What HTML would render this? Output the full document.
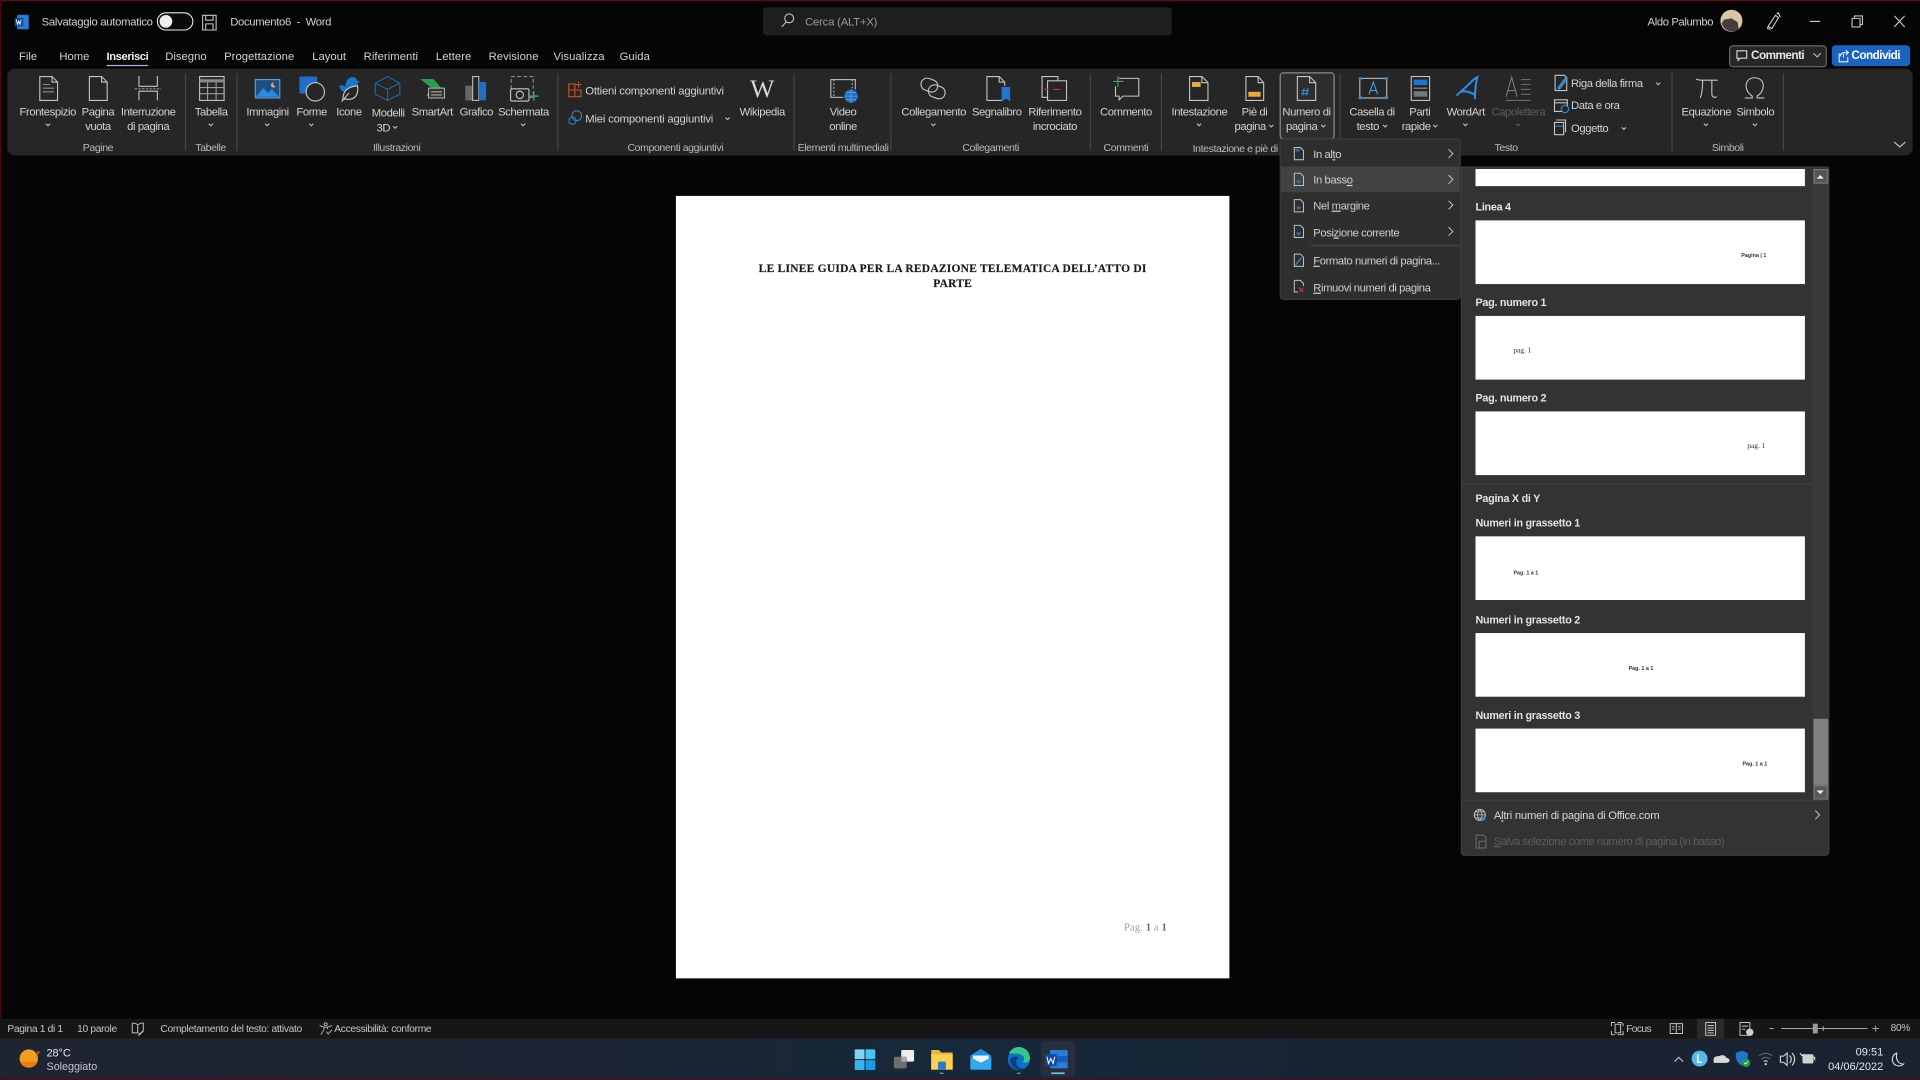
<!DOCTYPE html>
<html lang="it"><head><meta charset="utf-8"><title>Documento6 - Word</title>
<style>
html,body{margin:0;padding:0;width:1920px;height:1080px;overflow:hidden;background:#050505}
#w{position:absolute;left:0;top:0;width:1568px;height:882px;transform:scale(1.22449);transform-origin:0 0;background:#050505;font-family:"Liberation Sans",sans-serif;font-size:9.2px;letter-spacing:-.33px;color:#d2d2d2;overflow:hidden;filter:blur(.25px)}
#w div{position:absolute}
.t{position:absolute;white-space:nowrap;line-height:12px;transform:translateY(-50%)}
.c{position:absolute;white-space:nowrap;line-height:12px;transform:translate(-50%,calc(-50% + .3px));text-align:center}
.g{color:#b8b8b8;font-size:8.6px}
.sep{width:1px;top:60px;height:63px;background:#454545}
.th{left:1205px;width:269px;background:#fff}
.h{position:absolute;left:1205px;white-space:nowrap;font-weight:bold;font-size:8.8px;letter-spacing:-.22px;color:#e4e4e4;line-height:12px;transform:translateY(-50%)}
.n{position:absolute;white-space:nowrap;color:#333;line-height:8px;transform:translateY(-50%);letter-spacing:0}
.m{position:absolute;left:1072.5px;white-space:nowrap;color:#cfcfcf;line-height:12px;transform:translateY(-50%)}
.tab{position:absolute;white-space:nowrap;line-height:12px;transform:translateY(-50%);top:46px;letter-spacing:0}
.s{position:absolute;white-space:nowrap;line-height:12px;transform:translateY(-50%);top:840px;font-size:8.4px;letter-spacing:-.28px;color:#c4c4c4}
svg{position:absolute;left:0;top:0}
</style></head><body>
<div id="w">
<!-- window border -->
<div style="left:0;top:0;width:1568px;height:1px;background:#5e0c14"></div>
<div style="left:0;top:0;width:1px;height:882px;background:#4a0a10"></div>

<!-- search -->
<div style="left:623px;top:6px;width:334px;height:23px;background:#1e1e1e;border-radius:3px"></div>

<!-- ribbon -->
<div style="left:6px;top:56px;width:1556px;height:71px;background:#262626;border-radius:6px"></div>
<div class="sep" style="left:151px"></div><div class="sep" style="left:193px"></div><div class="sep" style="left:455px"></div><div class="sep" style="left:648px"></div><div class="sep" style="left:727px"></div><div class="sep" style="left:890px"></div><div class="sep" style="left:948px"></div><div class="sep" style="left:1094px"></div><div class="sep" style="left:1365px"></div><div class="sep" style="left:1456px"></div>
<div style="left:1045px;top:59px;width:43px;height:53px;border:1px solid #8c8c8c;border-radius:3px;background:#2e2e2e"></div>

<!-- doc page -->
<div style="left:552px;top:160px;width:451.500px;height:638.700px;background:#fff"></div>
<span class="c" style="left:778px;top:220px;font-family:'Liberation Serif',serif;font-weight:bold;font-size:9.400px;letter-spacing:.2px;color:#1a1a1a;-webkit-text-stroke:.12px #1a1a1a">LE LINEE GUIDA PER LA REDAZIONE TELEMATICA DELL’ATTO DI</span>
<span class="c" style="left:778px;top:231.500px;font-family:'Liberation Serif',serif;font-weight:bold;font-size:9.400px;letter-spacing:.2px;color:#1a1a1a;-webkit-text-stroke:.12px #1a1a1a">PARTE</span>
<span class="t" style="left:918px;top:758px;font-family:'Liberation Serif',serif;font-size:8.400px;letter-spacing:.2px;color:#9a9a9a">Pag. <b style="color:#666">1</b> a <b style="color:#666">1</b></span>

<!-- status + taskbar -->
<div style="left:0;top:832px;width:1568px;height:16px;background:#161616"></div>
<div style="left:1386px;top:832px;width:22px;height:16px;background:#2a2a2a"></div>
<div style="left:0;top:848px;width:1568px;height:34px;background:linear-gradient(90deg,#1f2431 0,#1c2533 30%,#16283a 50%,#182434 70%,#1b2230 100%)"></div>
<div style="left:850px;top:850px;width:28px;height:29px;background:#262f3b;border-radius:3px"></div>
<div style="left:0;top:881px;width:1568px;height:1px;background:#4a0f18"></div>

<!-- title bar text -->
<span class="t" style="left:34px;top:17.500px;letter-spacing:-.22px">Salvataggio automatico</span>
<span class="t" style="left:188px;top:17.500px;letter-spacing:-.25px">Documento6 &nbsp;-&nbsp; Word</span>
<span class="t" style="left:657.500px;top:17.800px;color:#9a9a9a;letter-spacing:-.15px">Cerca (ALT+X)</span>
<span class="t" style="left:1345.500px;top:17.500px;letter-spacing:-.3px">Aldo Palumbo</span>

<!-- tabs -->
<span class="tab" style="left:15.500px">File</span>
<span class="tab" style="left:48.500px">Home</span>
<span class="tab" style="left:87px;color:#eee;font-weight:bold;letter-spacing:-.35px">Inserisci</span>
<div style="left:87px;top:52.500px;width:34px;height:1.600px;background:#a9b7dc"></div>
<span class="tab" style="left:135px">Disegno</span>
<span class="tab" style="left:183px;letter-spacing:.05px">Progettazione</span>
<span class="tab" style="left:255px">Layout</span>
<span class="tab" style="left:297px;letter-spacing:.05px">Riferimenti</span>
<span class="tab" style="left:356px;letter-spacing:.05px">Lettere</span>
<span class="tab" style="left:399px;letter-spacing:.05px">Revisione</span>
<span class="tab" style="left:452px;letter-spacing:.05px">Visualizza</span>
<span class="tab" style="left:506px;letter-spacing:.05px">Guida</span>

<!-- Commenti/Condividi -->
<div style="left:1412px;top:37px;width:78px;height:16px;background:#262626;border:1px solid #666;border-radius:3px"></div>
<span class="t" style="left:1430px;top:46px;color:#e6e6e6;font-size:9.600px;font-weight:bold;letter-spacing:-.45px">Commenti</span>
<div style="left:1496px;top:37px;width:64px;height:17px;background:#1c62c0;border-radius:3px"></div>
<span class="t" style="left:1512px;top:46px;color:#fff;font-size:9.600px;font-weight:bold;letter-spacing:-.45px">Condividi</span>

<!-- ribbon labels -->
<span class="c" style="left:39px;top:91px">Frontespizio</span>
<span class="c" style="left:80px;top:91px">Pagina</span><span class="c" style="left:80px;top:102.500px">vuota</span>
<span class="c" style="left:121px;top:91px">Interruzione</span><span class="c" style="left:121px;top:102.500px">di pagina</span>
<span class="c" style="left:172.500px;top:91px">Tabella</span>
<span class="c" style="left:218.500px;top:91px">Immagini</span>
<span class="c" style="left:254.500px;top:91px">Forme</span>
<span class="c" style="left:285px;top:91px">Icone</span>
<span class="c" style="left:317px;top:92px">Modelli</span><span class="c" style="left:313px;top:103.500px">3D</span>
<span class="c" style="left:353px;top:91px">SmartArt</span>
<span class="c" style="left:389px;top:91px">Grafico</span>
<span class="c" style="left:427.500px;top:91px">Schermata</span>
<span class="t" style="left:478px;top:73.900px;letter-spacing:-.17px">Ottieni componenti aggiuntivi</span>
<span class="t" style="left:478px;top:96.900px;letter-spacing:-.15px">Miei componenti aggiuntivi</span>
<span class="c" style="left:622.500px;top:91px">Wikipedia</span>
<span class="c" style="left:622px;top:72px;font-family:'Liberation Serif',serif;font-size:21px;line-height:20px;letter-spacing:-1px;color:#d8d8d8">W</span>
<span class="c" style="left:688.500px;top:91px">Video</span><span class="c" style="left:688.500px;top:102.500px">online</span>
<span class="c" style="left:762.500px;top:91px">Collegamento</span>
<span class="c" style="left:814px;top:91px">Segnalibro</span>
<span class="c" style="left:861.500px;top:91px">Riferimento</span><span class="c" style="left:861.500px;top:102.500px">incrociato</span>
<span class="c" style="left:919.500px;top:91px">Commento</span>
<span class="c" style="left:979.500px;top:91px">Intestazione</span>
<span class="c" style="left:1024.500px;top:91px">Piè di</span><span class="c" style="left:1021px;top:102.500px">pagina</span>
<span class="c" style="left:1067px;top:91px">Numero di</span><span class="c" style="left:1063px;top:102.500px">pagina</span>
<span class="c" style="left:1120.500px;top:91px">Casella di</span><span class="c" style="left:1117px;top:102.500px">testo</span>
<span class="c" style="left:1159.500px;top:91px">Parti</span><span class="c" style="left:1156.500px;top:102.500px">rapide</span>
<span class="c" style="left:1197px;top:91px">WordArt</span>
<span class="c" style="left:1240px;top:91px;color:#5c5c5c">Capolettera</span>
<span class="t" style="left:1283px;top:67.500px">Riga della firma</span>
<span class="t" style="left:1283px;top:86px">Data e ora</span>
<span class="t" style="left:1283px;top:104.500px">Oggetto</span>
<span class="c" style="left:1393.500px;top:91px">Equazione</span>
<span class="c" style="left:1433.500px;top:91px">Simbolo</span>

<span class="c g" style="left:80px;top:120.200px">Pagine</span>
<span class="c g" style="left:172px;top:120.200px">Tabelle</span>
<span class="c g" style="left:324px;top:120.200px">Illustrazioni</span>
<span class="c g" style="left:551.500px;top:120.200px">Componenti aggiuntivi</span>
<span class="c g" style="left:688.500px;top:120.200px">Elementi multimediali</span>
<span class="c g" style="left:809px;top:120.200px">Collegamenti</span>
<span class="c g" style="left:919.500px;top:120.200px">Commenti</span>
<span class="t g" style="left:974px;top:120.500px">Intestazione e piè di pagina</span>
<span class="c g" style="left:1230px;top:120.200px">Testo</span>
<span class="c g" style="left:1411px;top:120.200px">Simboli</span>

<!-- status text -->
<span class="s" style="left:6px">Pagina 1 di 1</span>
<span class="s" style="left:63px">10 parole</span>
<span class="s" style="left:131px">Completamento del testo: attivato</span>
<span class="s" style="left:273px">Accessibilità: conforme</span>
<span class="s" style="left:1328px;letter-spacing:-.5px">Focus</span>
<span class="t" style="left:1544px;top:840px;font-size:8.200px;letter-spacing:-.15px;color:#c4c4c4">80%</span>
<span class="t" style="left:38px;top:859.500px;font-size:9px;letter-spacing:-.1px;color:#e6e6e6">28°C</span>
<span class="t" style="left:38px;top:871px;font-size:8.800px;letter-spacing:-.02px;color:#c0c4cc">Soleggiato</span>
<span class="t" style="right:30px;top:859px;font-size:9px;letter-spacing:0;color:#e6e6e6">09:51</span>
<span class="t" style="right:30px;top:870.500px;font-size:9px;letter-spacing:0;color:#e6e6e6">04/06/2022</span>

<svg width="1568" height="882" viewBox="0 0 1568 882" fill="none" stroke="#c4c4c4" stroke-width=".9">
<!-- word logo -->
<rect x="14" y="12" width="9.500" height="12" rx="1" fill="#2b7cd3" stroke="none"/><rect x="12" y="14.500" width="7" height="7" rx="1" fill="#124a9e" stroke="none"/><path d="M13.300 16l1 3.800 1-2.600 1 2.600 1-3.800" stroke="#fff" stroke-width=".7"/>
<!-- toggle -->
<rect x="128.500" y="10.500" width="29" height="14" rx="7" stroke="#e8e8e8" fill="#0a0a0a"/><circle cx="135.500" cy="17.500" r="5.200" fill="#eee" stroke="none"/>
<!-- save -->
<path d="M165.500 12.500h11v12h-11zM168 12.500v4h6v-4M168 24.500v-5h6v5"/>
<!-- search -->
<circle cx="644.500" cy="15" r="3.600"/><path d="M642 18l-3.600 4"/>
<!-- avatar -->
<circle cx="1414" cy="17" r="9" fill="#d9c6a9" stroke="none"/><path d="M1406 19a9 9 0 0 0 14 5l-1-6-5-3-6 1z" fill="#4a3a3e" stroke="none"/>
<!-- pen -->
<path d="M1444 21.500l6-9 2.500 1.800-5.500 9zM1444 21.500l-.5 1.800 2.500.8M1451 11.500l1.500-1.500M1454 14l-2-4" stroke="#d0d0d0"/>
<!-- window controls -->
<path d="M1478 17.500h8.500" stroke-width="1"/><path d="M1512.500 15h6.500v7h-6.500zM1514.500 15v-2h6.500v7h-2"/><path d="M1547 13l8.500 9M1555.500 13l-8.500 9"/>
<!-- commenti/condividi icons -->
<path d="M1418.500 41.500h8v6h-5.500l-1.500 1.800v-1.800h-1z" stroke="#ddd"/><path d="M1481 43.500l3 3 3-3" stroke="#bbb"/>
<path d="M1503 44h-1v6.500h7v-4M1505.500 44v3M1503 46a3 3 0 0 1 3-3h3M1507.500 41l2 2-2 2" stroke="#e8eef8"/>

<!-- chevrons -->
<g stroke="#c0c0c0" stroke-width=".9">
<path d="M37.500 101l1.700 1.700 1.700-1.700M170.500 101l1.700 1.700 1.700-1.700M216.500 101l1.700 1.700 1.700-1.700M252.500 101l1.700 1.700 1.700-1.700M321 103l1.700 1.700 1.700-1.700M425.500 101l1.700 1.700 1.700-1.700M592.500 96l1.700 1.700 1.700-1.700M760.500 101l1.700 1.700 1.700-1.700M977.500 101l1.700 1.700 1.700-1.700M1036.500 102l1.700 1.700 1.700-1.700M1079 102l1.700 1.700 1.700-1.700M1129.500 102l1.700 1.700 1.700-1.700M1170.500 102l1.700 1.700 1.700-1.700M1195 101l1.700 1.700 1.700-1.700M1352.500 67.500l1.700 1.700 1.700-1.700M1324.500 104l1.700 1.700 1.700-1.700M1391.500 101l1.700 1.700 1.700-1.700M1431.500 101l1.700 1.700 1.700-1.700"/>
<path d="M1238 101l1.700 1.700 1.700-1.700" stroke="#5c5c5c"/>
<path d="M1547 116l4.500 4 4.500-4" stroke-width="1"/>
</g>

<!-- Frontespizio -->
<path d="M32.500 62.500h10l4.500 4.500v15h-14.500zM42.500 62.500v4.500h4.500"/><path d="M35 69h6M35 72h9M35 75h9" stroke="#8e8e8e"/>
<!-- Pagina vuota -->
<path d="M73 62.500h10l4.500 4.500v15h-14.500zM83 62.500v4.500h4.500"/>
<!-- Interruzione -->
<path d="M113.500 62v8.500h15V62M113.500 82v-7.500h15V82"/><path d="M110 72.500h21.500" stroke="#6f87a8" stroke-width="1" stroke-dasharray="2 1"/>
<!-- Tabella -->
<rect x="163" y="62.500" width="20" height="19.500"/><path d="M163 66h20" stroke="#8a8a8a" stroke-width="2.500"/><path d="M163 71.500h20M163 76.500h20M169.500 67v15M176.500 67v15" stroke="#9a9a9a"/>
<!-- Immagini -->
<rect x="208.500" y="65" width="20" height="15" fill="#1d4f82" stroke="#5ba4e0"/><path d="M209 79l6-7 4 4 3-3 6 6z" fill="#2f8ade" stroke="none"/><path d="M223.500 67.500a2 2 0 1 0 1.500 3 2 2 0 0 1-1.500-3z" fill="#e4a84a" stroke="none"/>
<!-- Forme -->
<rect x="244.500" y="62.500" width="14.500" height="14" rx="1" fill="#1f6fc4" stroke="none"/><circle cx="257.500" cy="75" r="7.500" fill="#262626" stroke="#c8c8c8"/>
<!-- Icone -->
<path d="M277 70c2-1 4 0 5 1 0-4 2-8 6-8 2 0 3 1 4 3l2 1-2 1c0 4-2 7-5 8-4 1-9-1-10-6z" fill="#1e75c8" stroke="none"/><path d="M280 81c0-6 3-10 12-11 1 7-2 12-9 11zM279 83l6-7" stroke="#cfcfcf" fill="#262626"/>
<!-- Modelli 3D -->
<path d="M316.500 62.500l10 5.500v9l-10 5-10-5v-9zM306.500 68l10 5 10-5M316.500 73v9" stroke="#1f66ad"/>
<!-- SmartArt -->
<path d="M343 64.500h11l6 7-6 7h-6l4-7z" fill="#2c9c4a" stroke="none"/><rect x="350" y="72" width="13" height="8" fill="#333" stroke="#aaa"/><path d="M352 75h9M352 77.500h9" stroke="#aaa"/>
<!-- Grafico -->
<rect x="380" y="70" width="7" height="12" fill="#666" stroke="none"/><rect x="386" y="62.500" width="5" height="19.500" fill="#262626" stroke="#bbb"/><rect x="391" y="67" width="6" height="15" fill="#1f6fc4" stroke="none"/>
<!-- Schermata -->
<rect x="417.500" y="62.500" width="18" height="17" stroke="#8d8d8d" stroke-dasharray="3 2"/><rect x="417" y="72.500" width="15" height="10" rx="1" fill="#262626" stroke="#c8c8c8"/><circle cx="424.500" cy="77.500" r="3" stroke="#c8c8c8"/><path d="M432 78.500h8M436 74.500v8" stroke="#46a85a" stroke-width="1"/>
<!-- Ottieni -->
<path d="M464.500 68.500h5v5h5v5.500h-10zM464.500 73.500h5v5.500M472.500 66.500v5M470 69h5" stroke="#c8502c"/>
<!-- Miei -->
<circle cx="471" cy="94.500" r="4" stroke="#2e7fc7"/><circle cx="467.500" cy="98.500" r="3" stroke="#2e7fc7"/>
<!-- Video -->
<rect x="678.500" y="65" width="20" height="14.500" stroke="#bbb"/><path d="M681 65v14.500M696 65v14.500" stroke="#bbb" stroke-dasharray="1.500 1.500"/>
<circle cx="695" cy="78.500" r="6" fill="#1f6fc4" stroke="#262626"/><path d="M689.500 78.500h11M695 73v11M691 75.500h8M691 81.500h8" stroke="#7ab4e6" stroke-width=".5"/>
<!-- Collegamento -->
<rect x="752" y="64.500" width="14" height="10" rx="5" transform="rotate(20 759 69.500)"/><rect x="758" y="70" width="14" height="10" rx="5" transform="rotate(20 765 75)"/>
<!-- Segnalibro -->
<path d="M820.500 70v-3l-4.500-4.500h-10v19.500h12M816 62.500v4.500h4.500"/><path d="M818 71h7v12l-3.500-2.500-3.500 2.500z" fill="#1f76cc" stroke="none"/>
<!-- Riferimento -->
<path d="M864 66v-3.500h-13v17h5"/><rect x="855.500" y="66" width="15.500" height="16" fill="#262626"/><path d="M853 73h3M860 73h6" stroke="#c23a3a"/>
<!-- Commento -->
<path d="M914 64h16v14.500h-13l-3 3v-3h-3v-8"/><path d="M909 66.500h8.500M913 62v9" stroke="#46a85a"/>
<!-- Intestazione -->
<path d="M971.500 62.500h10l5 5v14.500h-15zM981.500 62.500v5h5"/><rect x="973.500" y="67" width="7" height="4" fill="#e8a94a" stroke="none"/>
<!-- Piè di -->
<path d="M1017.500 62.500h10l4.500 5v14.500h-14.500zM1027.500 62.500v5h4.500"/><rect x="1019.500" y="75" width="10" height="4" fill="#e8a94a" stroke="none"/>
<!-- Numero di pagina -->
<path d="M1059.500 62.500h10l5 5v14.500h-15zM1069.500 62.500v5h5"/><path d="M1065 72l-1 6M1068 72l-1 6M1063 74h6M1062.500 76.500h6" stroke="#3a8ad2"/>
<!-- Casella -->
<rect x="1110.500" y="64" width="22" height="16" stroke="#bbb"/><g fill="#2f86d4" stroke="none"><rect x="1109.500" y="63" width="2.500" height="2.500"/><rect x="1131" y="63" width="2.500" height="2.500"/><rect x="1109.500" y="78.500" width="2.500" height="2.500"/><rect x="1131" y="78.500" width="2.500" height="2.500"/></g><path d="M1118 77l3.500-10 3.500 10M1119 74h5" stroke="#4a9ae0"/>
<!-- Parti -->
<rect x="1152.500" y="62.500" width="15" height="19.500"/><rect x="1154.500" y="65" width="11" height="4.500" fill="#1f76cc" stroke="none"/><path d="M1154.500 72h11" stroke="#999"/><rect x="1154.500" y="74.500" width="11" height="4.500" fill="#777" stroke="none"/>
<!-- WordArt -->
<path d="M1189.500 78l11-10c1-1 2-3 6-5-1 4-2 10-2 18M1193 75c3-1 7 0 11 2" stroke="#2f8ae0" stroke-width="1.700"/>
<!-- Capolettera -->
<path d="M1230 79l4.500-16 4.500 16M1231.500 74h6" stroke="#7a7a7a"/><path d="M1242 65h8M1242 69h8M1242 73h8M1242 77h8M1230 82h20" stroke="#6a6a6a"/>
<!-- Riga firma etc -->
<path d="M1270 61.500h7.500l2 2v10.500h-9.500z"/><path d="M1272 72l6-8 1.500 1-6 8z" fill="#3a8ad2" stroke="#3a8ad2"/>
<path d="M1269.500 81.500h10.500v9.500h-10.500zM1269.500 84h10.500"/><circle cx="1278" cy="89" r="3" fill="#262626" stroke="#3a8ad2"/>
<path d="M1269.500 100h7.500v10h-7.500zM1271 98h7.500v10" /><path d="M1270 103h6.500" stroke="#3a8ad2"/>
<!-- pi / omega -->
<path d="M1385 64.500c2 1 4 1 6 1h12M1390.500 65.500c0 6-.5 11-2 14.500M1398 65.500v11c0 3 2 3.500 4 2.500"/>
<path d="M1425 80h6v-1.500c-3-2-5-5-5-8.500 0-4 3-6.500 7-6.500s7 2.500 7 6.500c0 3.500-2 6.500-5 8.500V80h6"/>
<!-- status icons -->
<path d="M108 835.500c2 0 3.500.5 4.500 1.500 1-1 2.500-1.500 4.500-1.500v6.500l-3.500 3.500h-1M108 835.500v8h4.500M112.500 837v6.500" stroke-width=".8"/><path d="M113 843.500l1 1 2.500-2.500" stroke-width=".7"/>
<circle cx="266" cy="836.500" r="1.200" stroke-width=".7"/><path d="M261 837.500c2 1 3 1.500 5 1.500s3-.5 5-1.500M264.500 839v2l-2.500 4M267.500 839v1.500" stroke-width=".7"/><path d="M266.500 842.500l1.500 2 3-3.500" stroke-width=".7"/>
<path d="M1316 838v-3h3M1321 835h3l1.500 1.500v1.500M1316 842v3h3M1321 845h4.500v-3" stroke-width=".8"/><rect x="1319" y="836.500" width="4.500" height="7" stroke-width=".8"/>
<path d="M1364 836h5v8h-5zM1369 836h5v8h-5zM1365.500 838.500h2M1365.500 840.500h2M1370.500 838.500h2M1370.500 840.500h2" stroke-width=".8"/>
<path d="M1393 835h8v10.500h-8zM1394.500 837.500h5M1394.500 839.500h5M1394.500 841.500h5M1394.500 843.500h5" stroke-width=".8"/>
<path d="M1421 835h8v10.500h-8zM1422.500 838h5M1422.500 840.500h3" stroke-width=".8"/><circle cx="1429" cy="843" r="3" fill="#cfcfcf" stroke="none"/>
<path d="M1445 840h3.500M1454.500 840h70.500M1529 840h5.500M1531.800 837.500v5" stroke="#b8b8b8" stroke-width=".7"/>
<rect x="1480.500" y="836" width="4" height="8" fill="#9a9a9a" stroke="none"/><path d="M1489 838v4" stroke="#b8b8b8" stroke-width=".7"/>
<!-- weather -->
<circle cx="23.500" cy="864.500" r="7.500" fill="#f0a020" stroke="none"/><path d="M16.500 867a7.500 7.500 0 0 0 14 0" fill="#f07a1a" stroke="none"/><path d="M30 858l3 1-2.500 3z" fill="#d8342a" stroke="none"/>
<!-- start -->
<g stroke="none"><rect x="698" y="857" width="8" height="8" rx=".7" fill="#7fd4f4"/><rect x="706.800" y="857" width="8" height="8" rx=".7" fill="#4cc2f1"/><rect x="698" y="865.800" width="8" height="8" rx=".7" fill="#3ab4ee"/><rect x="706.800" y="865.800" width="8" height="8" rx=".7" fill="#1a9ae6"/></g>
<!-- task view -->
<rect x="736" y="857.500" width="10.500" height="9.500" rx="1" fill="#eee" stroke="none"/><rect x="730" y="863" width="10.500" height="9.500" rx="1" fill="#6e6e6e" stroke="none"/><rect x="736" y="863" width="4.500" height="4" fill="#aaa" stroke="none"/>
<!-- explorer -->
<path d="M760.500 857.500h6.500l1.500 2h9.500v14h-17.500z" fill="#e8b43c" stroke="none"/><path d="M760.500 861h17.500v12.500h-17.500z" fill="#fcd050" stroke="none"/><rect x="766" y="867" width="6.500" height="6.500" rx="1" fill="#2a78c8" stroke="none"/>
<path d="M767.500 876.500h3" stroke="#8b939e" stroke-width="1"/>
<!-- mail -->
<path d="M792.500 862l8.500-5.500 8.500 5.500v11.500h-17z" fill="#1e8fe0" stroke="none"/><path d="M794.500 862h13l0 2.500-6.500 3.500-6.500-3.500z" fill="#e8f4fc" stroke="none"/><path d="M792.500 863.500l8.500 5 8.500-5v10h-17z" fill="#35a8ee" stroke="none"/>
<!-- edge -->
<circle cx="832" cy="865" r="9" fill="#0f6fc2" stroke="none"/><path d="M824 860a9 9 0 0 1 17 3c1 4-3 6-6 4 2-1 2-5-2-6-4-1-7 0-9-1z" fill="#35c48a" stroke="none"/><path d="M825 866c0-3 5-4 7-2-3 1-3 6 1 8 3 1 5 1 6-1-2 3-6 4-9 2-3-1-5-4-5-7z" fill="#0a3f80" stroke="none"/>
<path d="M830.500 876.500h3" stroke="#8b939e" stroke-width="1"/>
<!-- word task -->
<rect x="857.500" y="857.500" width="14.500" height="15" rx="1" fill="#2b7cd3" stroke="none"/><rect x="857.500" y="862.500" width="14.500" height="5" fill="#185abd" stroke="none"/><rect x="853.500" y="861" width="9.500" height="9.500" rx="1" fill="#114a9c" stroke="none"/><path d="M855 863l1.300 5.500 1.900-4 1.900 4 1.300-5.500" stroke="#fff" stroke-width=".8"/>
<path d="M858.500 876.500h11" stroke="#78c8f0" stroke-width="1.300"/>
<!-- tray -->
<path d="M1367.500 867l3.500-3.500 3.500 3.500" stroke="#c8c8c8"/>
<circle cx="1388" cy="864.500" r="6.500" fill="#5cb6e6" stroke="none"/><path d="M1386.500 861v6.500h3.500" stroke="#fff" stroke-width="1.200"/>
<path d="M1399.500 868h10c2 0 3-1 3-2s-1-2-2.500-2c-1-2.500-4-3-6-1.500-2 0-4.500.5-4.500 2.500 0 1.500 0 3 0 3z" fill="#d8d8d8" stroke="none"/>
<path d="M1422.500 858l5 2c0 5-1 8-5 10.500-4-2.500-5-5.500-5-10.500z" fill="#1f76cc" stroke="none"/><circle cx="1426" cy="868" r="3.500" fill="#1e9c48" stroke="none"/><path d="M1424.500 868l1 1 2-2" stroke="#fff" stroke-width=".7"/>
<path d="M1436.500 862.500a8 8 0 0 1 11 0M1438.500 865a5 5 0 0 1 7 0" stroke="#666"/><path d="M1440.500 867a2 2 0 0 1 3 0" stroke="#ddd"/><circle cx="1442" cy="869" r=".9" fill="#ddd" stroke="none"/>
<path d="M1454 862.500v5h2.500l3 2.500v-10l-3 2.500zM1461.500 862a4 4 0 0 1 0 6M1463.500 860a7 7 0 0 1 0 10" stroke="#ddd"/>
<rect x="1472" y="861" width="9" height="7.500" rx="1" fill="#d0d0d0" stroke="none"/><path d="M1470 860l1.500 2 2-1M1481 863.500h1v2.500" stroke="#ddd"/>
<path d="M1549 860c-1 5 1 9 5.500 9-1.500 1.500-4 2-6 1-2.500-1-3.500-3.500-3-6 .5-2 2-3.500 3.500-4z" stroke="#ddd"/>
</svg>

<!-- gallery panel -->
<div style="left:1193px;top:136px;width:301px;height:563px;background:#343232;border:1px solid #3f3e3e;box-sizing:border-box;border-radius:0 2px 3px 3px"></div>
<div class="th" style="top:138px;height:14px"></div>
<span class="h" style="top:168.500px">Linea 4</span><div class="th" style="top:179.500px;height:52px"></div>
<span class="h" style="top:247px">Pag. numero 1</span><div class="th" style="top:257.500px;height:52px"></div>
<span class="h" style="top:325.300px">Pag. numero 2</span><div class="th" style="top:335.600px;height:52px"></div>
<div style="left:1195px;top:395px;width:285px;height:1px;background:#3f3e3e"></div>
<span class="h" style="top:407.300px">Pagina X di Y</span>
<span class="h" style="top:427.300px">Numeri in grassetto 1</span><div class="th" style="top:438.400px;height:52px"></div>
<span class="h" style="top:505.800px">Numeri in grassetto 2</span><div class="th" style="top:516.500px;height:52px"></div>
<span class="h" style="top:584px">Numeri in grassetto 3</span><div class="th" style="top:595px;height:52px"></div>
<span class="n" style="left:1422px;top:208.700px;font-size:4.400px;font-weight:bold">Pagina | 1</span>
<span class="n" style="left:1236px;top:286.700px;font-size:6px;font-family:'Liberation Serif',serif">pag. 1</span>
<span class="n" style="left:1427px;top:364.700px;font-size:6px;font-family:'Liberation Serif',serif">pag. 1</span>
<span class="n" style="left:1236px;top:467.700px;font-size:4.400px;font-weight:bold">Pag. 1 a 1</span>
<span class="n" style="left:1330px;top:545.700px;font-size:4.400px;font-weight:bold">Pag. 1 a 1</span>
<span class="n" style="left:1423px;top:623.700px;font-size:4.400px;font-weight:bold">Pag. 1 a 1</span>
<!-- scrollbar -->
<div style="left:1480px;top:138px;width:13px;height:515px;background:#3a3939"></div>
<div style="left:1480.500px;top:138px;width:12px;height:12px;background:#555;border:.5px solid #777;box-sizing:border-box"></div>
<div style="left:1480.500px;top:587px;width:12px;height:54px;background:#808080"></div>
<div style="left:1480.500px;top:641px;width:12px;height:12px;background:#5a5a5a;border:.5px solid #777;box-sizing:border-box"></div>
<div style="left:1195px;top:653px;width:296px;height:1px;background:#3f3e3e"></div>
<span class="t" style="left:1220px;top:666px;color:#d8d8d8;letter-spacing:-.2px">A<u>l</u>tri numeri di pagina di Office.com</span>
<span class="t" style="left:1220px;top:687.300px;color:#5e5e5e;letter-spacing:-.37px"><u>S</u>alva selezione come numero di pagina (in basso)</span>

<!-- left menu -->
<div style="left:1045px;top:113px;width:148px;height:132px;background:#2f2e2e;border:1px solid #3a3939;box-sizing:border-box;border-radius:3px"></div>
<div style="left:1046px;top:136px;width:146px;height:21px;background:#434242"></div>
<div style="left:1070px;top:200px;width:122px;height:1px;background:#454444"></div>
<span class="m" style="top:125.500px">In al<u>t</u>o</span>
<span class="m" style="top:147px">In bass<u>o</u></span>
<span class="m" style="top:168px">Nel <u>m</u>argine</span>
<span class="m" style="top:189.600px">Posi<u>z</u>ione corrente</span>
<span class="m" style="top:213px"><u>F</u>ormato numeri di pagina...</span>
<span class="m" style="top:234.600px"><u>R</u>imuovi numeri di pagina</span>

<svg width="1568" height="882" viewBox="0 0 1568 882" fill="none" stroke="#c4c4c4" stroke-width=".8">
<path d="M1183 122l3.500 3.500-3.500 3.500M1183 143l3.500 3.500-3.500 3.500M1183 164l3.500 3.500-3.500 3.500M1183 185.500l3.500 3.500-3.500 3.500"/>
<path d="M1057 120.500h5l2.500 2.500v7.500h-7.500zM1057 141.500h5l2.500 2.500v7.500h-7.500zM1057 163h5l2.500 2.500v7.500h-7.500zM1057 184h5l2.500 2.500v7.500h-7.500z"/>
<g fill="#2a6ca8" stroke="none"><rect x="1058" y="121.500" width="3.500" height="2.200"/><rect x="1059" y="147" width="3" height="2.500"/><rect x="1059" y="168.500" width="3" height="2.500"/><rect x="1059" y="189.500" width="3" height="2.500"/></g>
<path d="M1057 207.500h5l2.500 2.500v7.500h-7.500z"/><path d="M1058 216.500l5-6" stroke="#3a8ad2" stroke-width="1.100"/>
<path d="M1057 229h5l2.500 2.500v2M1057 229v9.500h3"/><path d="M1061 235l3.500 3.500M1064.500 235l-3.500 3.500" stroke="#c83a3a"/>
<path d="M1484.500 145.500l2-2 2 2z" fill="#eee" stroke="#eee"/><path d="M1484.500 646l2 2 2-2z" fill="#eee" stroke="#eee"/>
<circle cx="1208.500" cy="665.500" r="4.500"/><path d="M1204 665.500h9M1204.800 663h7.400M1204.800 668h7.400M1208.500 661c-2.500 3-2.500 6 0 9M1208.500 661c2.500 3 2.500 6 0 9" stroke-width=".6"/><circle cx="1211.500" cy="668.500" r="1.500" fill="#3a8ad2" stroke="none"/>
<path d="M1482.500 662l3.500 3.500-3.500 3.500"/>
<path d="M1205.500 682h6l2 2v8.500h-8zM1208 687h5.500v5.500h-5.500z" stroke="#6e6e6e"/>
</svg>
</div>
</body></html>
